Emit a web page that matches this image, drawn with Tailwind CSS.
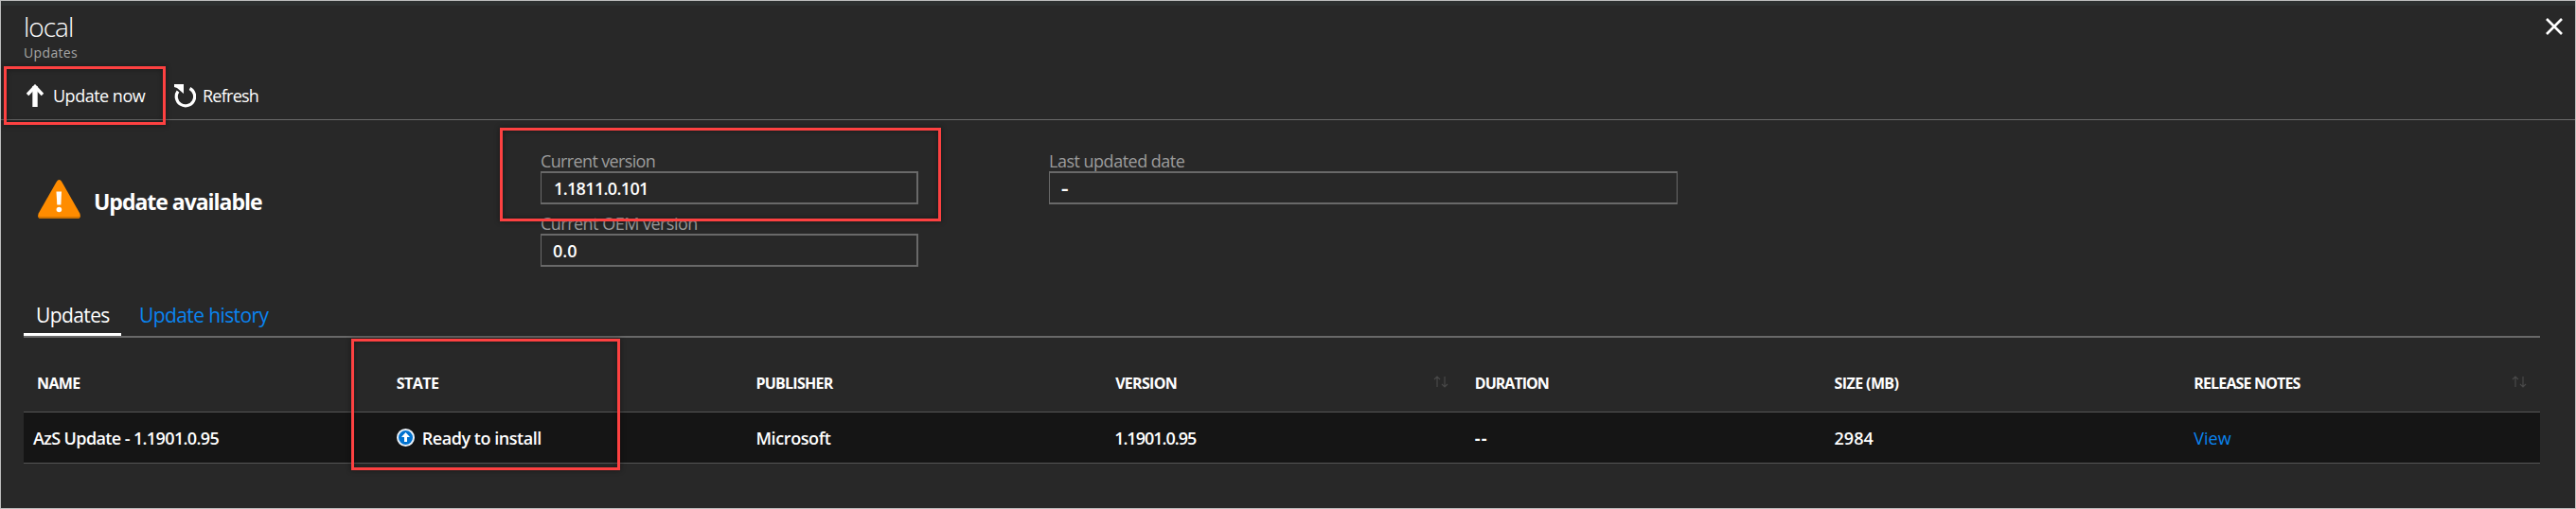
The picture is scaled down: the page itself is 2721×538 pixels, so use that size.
<!DOCTYPE html>
<html lang="en"><head><meta charset="utf-8"><title>Updates</title>
<script src="https://cdn.jsdelivr.net/npm/@tailwindcss/browser@4"></script></head>
<body class="bg-[#282828]">
<div class="relative w-[2721px] h-[538px] overflow-hidden border border-[#bdbdbd] bg-[#282828] font-['Open_Sans','Noto_Sans',sans-serif] text-white whitespace-nowrap">
  <div class="h-[5px] bg-[#2d3030]"></div>
  <header class="flex justify-between pt-[6px] pl-[24px] pr-[13px]">
    <div>
      <h1 class="text-[28px] leading-[32px] font-light tracking-[-1px]">local</h1>
      <p class="mt-[2px] text-[14px] leading-[20px] font-medium tracking-[0.35px] text-[#a6a6a6]">Updates</p>
    </div>
    <svg class="mt-[7px] w-[18px] h-[18px]" viewBox="0 0 18 18" fill="none" stroke="#fff" stroke-width="2.6"><path d="M1 1L17 17M17 1L1 17"/></svg>
  </header>
  <nav class="mt-[10px] h-[51px] border-b border-[#696969] flex items-center text-[18px] leading-[24px] font-medium">
    <div class="flex items-center pl-[27px] w-[182px]">
      <svg class="w-[18px] h-[24px] mr-[10px]" viewBox="0 0 18 24" fill="none" stroke="#fff"><path d="M9 24V2" stroke-width="5.4"/><path d="M1 11L9 2.5L17 11" stroke-width="3.6"/></svg>
      <span class="tracking-[-0.5px]">Update now</span>
    </div>
    <div class="flex items-center">
      <svg class="w-[24px] h-[25px] mr-[7px]" viewBox="0 0 24 25" fill="none"><path d="M17.500 4.500A9.700 9.700 0 1 1 5 7.500" stroke="#fff" stroke-width="3.200"/><path d="M1 0H11V10L7.500 7L4 4L1 3Z" fill="#fff"/></svg>
      <span class="tracking-[-0.75px]">Refresh</span>
    </div>
  </nav>
  <section class="flex">
    <div class="flex items-start pl-[39px] pt-[63px] w-[570px]">
      <svg class="w-[45px] h-[41px] mr-[14px]" viewBox="0 0 45 41"><path d="M22.5 0Q24 0 25.2 2L44.3 35.5Q46 41 42 41H3Q-1 41 .7 35.5L19.8 2Q21 0 22.5 0Z" fill="#ff8c00"/><path d="M.3 38Q.6 41 3 41H42Q44.400 41 44.700 38Q44 39 42 39H3Q1 39 .3 38Z" fill="#d27400"/><path d="M19.500 12.500H25L24.400 26.500H20.300Z" fill="#fff"/><circle cx="22.400" cy="31.500" r="2.800" fill="#fff"/></svg>
      <span class="mt-[7px] text-[23px] leading-[32px] font-bold tracking-[-1.02px]">Update available</span>
    </div>
    <div class="w-[399px] pt-[32px] text-[18px] leading-[22px]">
      <div class="text-[#9c9c9c] tracking-[-0.64px]">Current version</div>
      <div class="h-[35px] border-2 border-l border-[#696969] flex items-center pl-[13px] font-semibold tracking-[-0.64px]">1.1811.0.101</div>
      <div class="mt-[9px] text-[#9c9c9c] tracking-[-0.52px]">Current OEM version</div>
      <div class="h-[35px] border-2 border-l border-[#696969] flex items-center pl-[12px] font-semibold">0.0</div>
    </div>
    <div class="ml-[138px] w-[664px] pt-[32px] text-[18px] leading-[22px]">
      <div class="text-[#9c9c9c] tracking-[-0.5px]">Last updated date</div>
      <div class="h-[35px] border-y-2 border-x border-[#696969] flex items-center pl-[12px] font-bold"><span class="inline-block origin-left scale-x-130">-</span></div>
    </div>
  </section>
  <div class="mt-[36px] ml-[24px] w-[2658px] h-[39px] border-b-2 border-[#696969] flex text-[21px] leading-[30px]">
    <div class="w-[103px] h-[37px] border-b-[3px] border-white pl-[13px] tracking-[-0.6px]">Updates</div>
    <div class="pl-[19px] text-[#0a84f0] tracking-[-0.6px]">Update history</div>
  </div>
  <div class="ml-[24px] w-[2658px] h-[79px] border-b border-[#555] grid grid-cols-7 items-center pt-[18px] text-[16px] leading-[20px] font-bold">
    <div class="pl-[14px] tracking-[-0.6px]">NAME</div>
    <div class="pl-[14px] tracking-[-0.5px]">STATE</div>
    <div class="pl-[14px] tracking-[-0.75px]">PUBLISHER</div>
    <div class="pl-[14px] pr-[14px] flex items-center justify-between"><span class="tracking-[-0.7px]">VERSION</span>
      <svg class="w-[16px] h-[13px] -mt-[4px]" viewBox="0 0 16 13" fill="none" stroke="#484848" stroke-width="1.200"><path d="M4 12V1M1 4L4 1L7 4M12 1V12M9 9L12 12L15 9"/></svg></div>
    <div class="pl-[14px] tracking-[-1px]">DURATION</div>
    <div class="pl-[14px] tracking-[-0.6px]">SIZE (MB)</div>
    <div class="pl-[14px] pr-[14px] flex items-center justify-between"><span class="tracking-[-0.85px]">RELEASE NOTES</span>
      <svg class="w-[16px] h-[13px] -mt-[4px]" viewBox="0 0 16 13" fill="none" stroke="#484848" stroke-width="1.200"><path d="M4 12V1M1 4L4 1L7 4M12 1V12M9 9L12 12L15 9"/></svg></div>
  </div>
  <div class="ml-[24px] w-[2658px] h-[54px] bg-[#151515] border-b border-[#555] grid grid-cols-7 items-center text-[18px] leading-[24px] font-semibold">
    <div class="pl-[10px] tracking-[-0.62px]">AzS Update - 1.1901.0.95</div>
    <div class="pl-[14px] flex items-center"><svg class="w-[19px] h-[19px] mr-[8px]" viewBox="0 0 19 19"><circle cx="9.500" cy="9.500" r="8.500" fill="#0072d0" stroke="#e8f0f8" stroke-width="2"/><path d="M9.500 4L14 9H11V14H8V9H5Z" fill="#fff"/></svg><span class="tracking-[-0.45px]">Ready to install</span></div>
    <div class="pl-[14px] tracking-[-0.4px]">Microsoft</div>
    <div class="pl-[13px] tracking-[-1px]">1.1901.0.95</div>
    <div class="pl-[14px] font-bold tracking-[1px]">--</div>
    <div class="pl-[14px]">2984</div>
    <div class="pl-[14px] font-normal text-[#0a84f0]">View</div>
  </div>
  <div class="absolute left-[3px] top-[69px] w-[171px] h-[62px] border-3 border-[#fd4141] shadow-[0_0_5px_1px_rgba(0,0,0,.3),inset_0_0_5px_1px_rgba(0,0,0,.3)]"></div>
  <div class="absolute left-[527px] top-[134px] w-[466px] h-[99px] border-3 border-[#fd4141] shadow-[0_0_5px_1px_rgba(0,0,0,.3),inset_0_0_5px_1px_rgba(0,0,0,.3)]"></div>
  <div class="absolute left-[370px] top-[357px] w-[284px] h-[139px] border-3 border-[#fd4141] shadow-[0_0_5px_1px_rgba(0,0,0,.3),inset_0_0_5px_1px_rgba(0,0,0,.3)]"></div>
</div>
</body></html>
